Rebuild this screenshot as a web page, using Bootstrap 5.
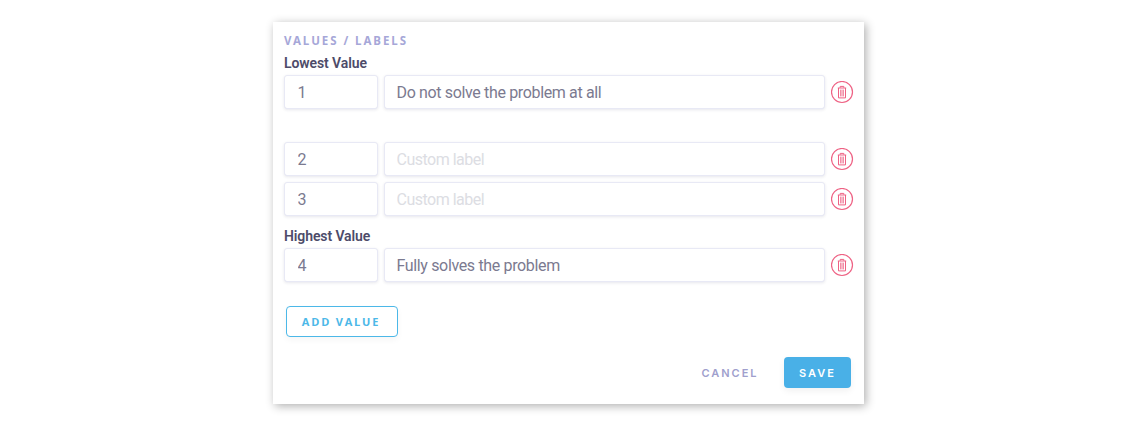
<!DOCTYPE html>
<html lang="en">
<head>
<meta charset="utf-8">
<meta name="viewport" content="width=device-width, initial-scale=1">
<title>Values / Labels</title>
<link href="https://cdn.jsdelivr.net/npm/bootstrap@5.3.0/dist/css/bootstrap.min.css" rel="stylesheet">
<style>
  body { background: #fff; font-family: Roboto, "Open Sans", sans-serif; }
  .stage { height: 423px; padding: 22px 0 0 273px; }
  .panel { width: 591px; height: 382px; padding: 11px 10px 0 11px; background: #fff; box-shadow: 2px 2px 9px rgba(0,0,0,.32); }
  .panel-heading { font-family: "Noto Sans", sans-serif; font-size: 11.5px; line-height: 15px; font-weight: 700; letter-spacing: 1.95px; color: #a6a7d8; }
  .row-label { font-size: 14px; line-height: 18px; font-weight: 600; color: #4d4b69; letter-spacing: -.1px; }
  .value-row { gap: 6px; height: 34px; }
  .value-row .form-control { height: 34px; padding: 1px 12px 0 11.5px; font-size: 16px; line-height: 24px; letter-spacing: -.35px; color: #7b7a90; border: 1px solid #e8e9f5; border-radius: 3px; box-shadow: 0 1px 3px rgba(60,60,110,.12); }
  .value-row .form-control::placeholder { color: #dcdde3; opacity: 1; letter-spacing: -.5px; }
  .value-row .num { width: 94px; flex: none; padding-left: 12.5px; }
  .trash { width: 23px; height: 23px; flex: none; line-height: 0; }
  .act { font-size: 11px; font-weight: 700; line-height: 14px; letter-spacing: 2px; border-radius: 4px; height: 31px; padding: 0; }
  .add { width: 112px; margin: 24px 0 0 2px; padding-right: 2px; color: #4cb8e8; border: 1px solid #4cb8e8; background: #fff; font-family: "Open Sans", sans-serif; letter-spacing: 1.8px; box-shadow: 0 3px 6px rgba(0,0,0,.04); }
  .cancel { width: 60px; color: #a09fcd; font-family: Inter, sans-serif; font-weight: 600; border: 0; }
  .save { width: 67px; color: #fff; background: #49b0e7; font-family: Inter, sans-serif; font-weight: 600; border: 0; box-shadow: 0 3px 7px rgba(0,0,0,.06); }
</style>
</head>
<body>
<svg class="d-none" xmlns="http://www.w3.org/2000/svg">
  <symbol id="trash" viewBox="0 0 23 23">
    <g fill="none" stroke="#ee6284">
      <circle cx="11" cy="11" r="10.5" stroke-width="1.2"/>
      <path d="M6.8 7h8.4M9.2 6.7V5.4h3.6v1.3M7.5 7v9.9h7V7" stroke-width="1"/>
      <path d="M9.6 8.6v6.8M11 8.6v6.8M12.4 8.6v6.8" stroke-width=".8"/>
    </g>
  </symbol>
</svg>
<div class="stage">
<main class="panel d-flex flex-column">
  <div class="panel-heading">VALUES / LABELS</div>
  <div class="row-label" style="margin:6px 0 3px">Lowest Value</div>
  <div class="value-row d-flex align-items-center">
    <input class="form-control num" value="1" aria-label="Value">
    <input class="form-control" value="Do not solve the problem at all" aria-label="Label">
    <button class="btn p-0 border-0 trash" aria-label="Delete"><svg width="23" height="23"><use href="#trash"/></svg></button>
  </div>
  <div class="value-row d-flex align-items-center" style="margin-top:33px">
    <input class="form-control num" value="2" aria-label="Value">
    <input class="form-control" placeholder="Custom label" aria-label="Label">
    <button class="btn p-0 border-0 trash" aria-label="Delete"><svg width="23" height="23"><use href="#trash"/></svg></button>
  </div>
  <div class="value-row d-flex align-items-center" style="margin-top:6px">
    <input class="form-control num" value="3" aria-label="Value">
    <input class="form-control" placeholder="Custom label" aria-label="Label">
    <button class="btn p-0 border-0 trash" aria-label="Delete"><svg width="23" height="23"><use href="#trash"/></svg></button>
  </div>
  <div class="row-label" style="margin:11px 0 3px">Highest Value</div>
  <div class="value-row d-flex align-items-center">
    <input class="form-control num" value="4" aria-label="Value">
    <input class="form-control" value="Fully solves the problem" aria-label="Label">
    <button class="btn p-0 border-0 trash" aria-label="Delete"><svg width="23" height="23"><use href="#trash"/></svg></button>
  </div>
  <button class="btn act add">ADD VALUE</button>
  <div class="d-flex justify-content-end" style="margin:20px 3px 0 0;gap:24px">
    <button class="btn act cancel">CANCEL</button>
    <button class="btn act save">SAVE</button>
  </div>
</main>
</div>
<script src="https://cdn.jsdelivr.net/npm/bootstrap@5.3.0/dist/js/bootstrap.bundle.min.js"></script>
</body>
</html>
